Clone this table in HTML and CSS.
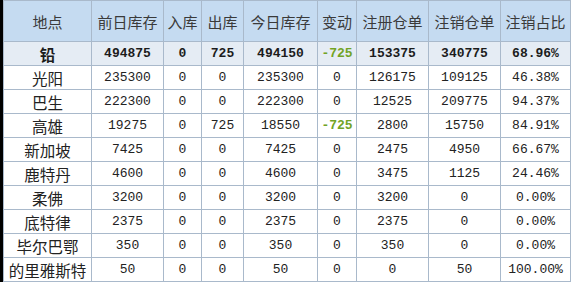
FILE: index.html
```html
<!DOCTYPE html>
<html lang="zh">
<head>
<meta charset="utf-8">
<link rel="stylesheet" href="styles.css">
</head>
<body>
<div class="frame">
<table class="stock">
<colgroup>
<col class="c1"><col class="c2"><col class="c3"><col class="c4"><col class="c5"><col class="c6"><col class="c7"><col class="c8"><col class="c9">
</colgroup>
<thead>
<tr><th>地点</th><th>前日库存</th><th>入库</th><th>出库</th><th>今日库存</th><th>变动</th><th>注册仓单</th><th>注销仓单</th><th>注销占比</th></tr>
</thead>
<tbody>
<tr class="total"><td class="name">铅</td><td>494875</td><td>0</td><td>725</td><td>494150</td><td class="neg">-725</td><td>153375</td><td>340775</td><td>68.96%</td></tr>
<tr><td class="name">光阳</td><td>235300</td><td>0</td><td>0</td><td>235300</td><td>0</td><td>126175</td><td>109125</td><td>46.38%</td></tr>
<tr><td class="name">巴生</td><td>222300</td><td>0</td><td>0</td><td>222300</td><td>0</td><td>12525</td><td>209775</td><td>94.37%</td></tr>
<tr><td class="name">高雄</td><td>19275</td><td>0</td><td>725</td><td>18550</td><td class="neg">-725</td><td>2800</td><td>15750</td><td>84.91%</td></tr>
<tr><td class="name">新加坡</td><td>7425</td><td>0</td><td>0</td><td>7425</td><td>0</td><td>2475</td><td>4950</td><td>66.67%</td></tr>
<tr><td class="name">鹿特丹</td><td>4600</td><td>0</td><td>0</td><td>4600</td><td>0</td><td>3475</td><td>1125</td><td>24.46%</td></tr>
<tr><td class="name">柔佛</td><td>3200</td><td>0</td><td>0</td><td>3200</td><td>0</td><td>3200</td><td>0</td><td>0.00%</td></tr>
<tr><td class="name">底特律</td><td>2375</td><td>0</td><td>0</td><td>2375</td><td>0</td><td>2375</td><td>0</td><td>0.00%</td></tr>
<tr><td class="name">毕尔巴鄂</td><td>350</td><td>0</td><td>0</td><td>350</td><td>0</td><td>350</td><td>0</td><td>0.00%</td></tr>
<tr><td class="name">的里雅斯特</td><td>50</td><td>0</td><td>0</td><td>50</td><td>0</td><td>0</td><td>50</td><td>100.00%</td></tr>
</tbody>
</table>
</div>
</body>
</html>
```
FILE: styles.css
```css
html, body {
  margin: 0;
  padding: 0;
  background: #ffffff;
}
.frame {
  border-left: 3px solid #000000;
  height: 282px;
  box-sizing: border-box;
}
.stock {
  border-collapse: collapse;
  table-layout: fixed;
  width: 567px;
  font-family: "Liberation Mono", "Noto Sans CJK SC", monospace;
  font-size: 13px;
  color: #222222;
}
.c1 { width: 88px; }
.c2 { width: 72px; }
.c3 { width: 38px; }
.c4 { width: 42px; }
.c5 { width: 74px; }
.c6 { width: 39px; }
.c7 { width: 72px; }
.c8 { width: 72px; }
.c9 { width: 70px; }
.stock th, .stock td {
  border: 1px solid #a9b9cb;
  text-align: center;
  padding: 0;
  white-space: nowrap;
  overflow: hidden;
}
.stock th {
  height: 40px;
  background: #c5dbf1;
  font-family: "Noto Sans CJK SC", sans-serif;
  font-weight: normal;
  font-size: 15px;
  color: #3a3a3a;
}
.stock td {
  height: 23px;
}
.stock td.name {
  font-family: "Noto Sans CJK SC", sans-serif;
  font-size: 15.5px;
  color: #222222;
}
.stock tr.total td {
  background: #e5ecf4;
  font-weight: bold;
  color: #1c1c1c;
}
.stock tr td.neg {
  color: #72a325;
  font-weight: bold;
}
```
